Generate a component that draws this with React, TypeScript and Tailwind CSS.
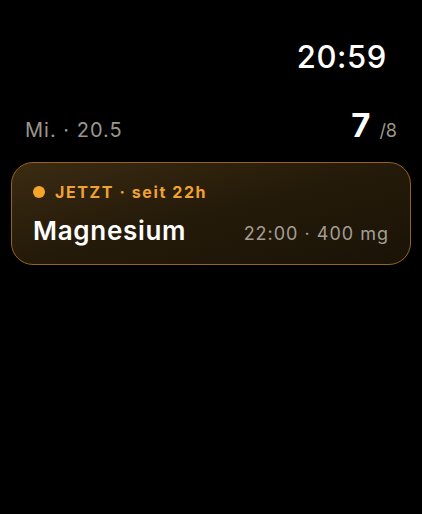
export default function App() {
  return (
    <div
      className="w-[422px] h-[514px] bg-black text-white overflow-hidden"
      style={{ fontFamily: 'Inter, "Noto Sans", sans-serif' }}
    >
      {/* Statusleiste */}
      <div className="flex justify-end pr-[35px] pt-[41px] h-[84px]">
        <span className="text-[31px] font-medium leading-none tracking-[0.6px]">20:59</span>
      </div>

      {/* Kopfzeile */}
      <div className="flex items-end justify-between px-[25px] mt-[25px]">
        <span className="text-[20px] text-[#9b978f] leading-none pb-[2px] tracking-[1px]">Mi. · 20.5</span>
        <div className="flex items-baseline gap-[9px]">
          <span className="text-[33px] font-bold leading-none">7</span>
          <span className="text-[18px] text-[#9b978f] leading-none">/8</span>
        </div>
      </div>

      {/* Karte */}
      <div className="mx-[11px] mt-[20px] h-[103px] rounded-[22px] border-[1.5px] border-[#946520] bg-gradient-to-br from-[#3b2b12] via-[#241a09] to-[#1a1306] px-[21px] pt-[21px]">
        <div className="flex items-center gap-[10px]">
          <span className="w-[12px] h-[12px] rounded-full bg-[#f5a62a]" />
          <span className="text-[16px] font-bold text-[#f0a232] tracking-[1.6px] leading-none">JETZT · seit 22h</span>
        </div>
        <div className="flex items-baseline justify-between mt-[18px]">
          <span className="text-[26px] font-semibold leading-none tracking-[0.7px]">Magnesium</span>
          <span className="text-[18px] text-[#a39e95] leading-none tracking-[1px]">22:00 · 400 mg</span>
        </div>
      </div>
    </div>
  );
}
